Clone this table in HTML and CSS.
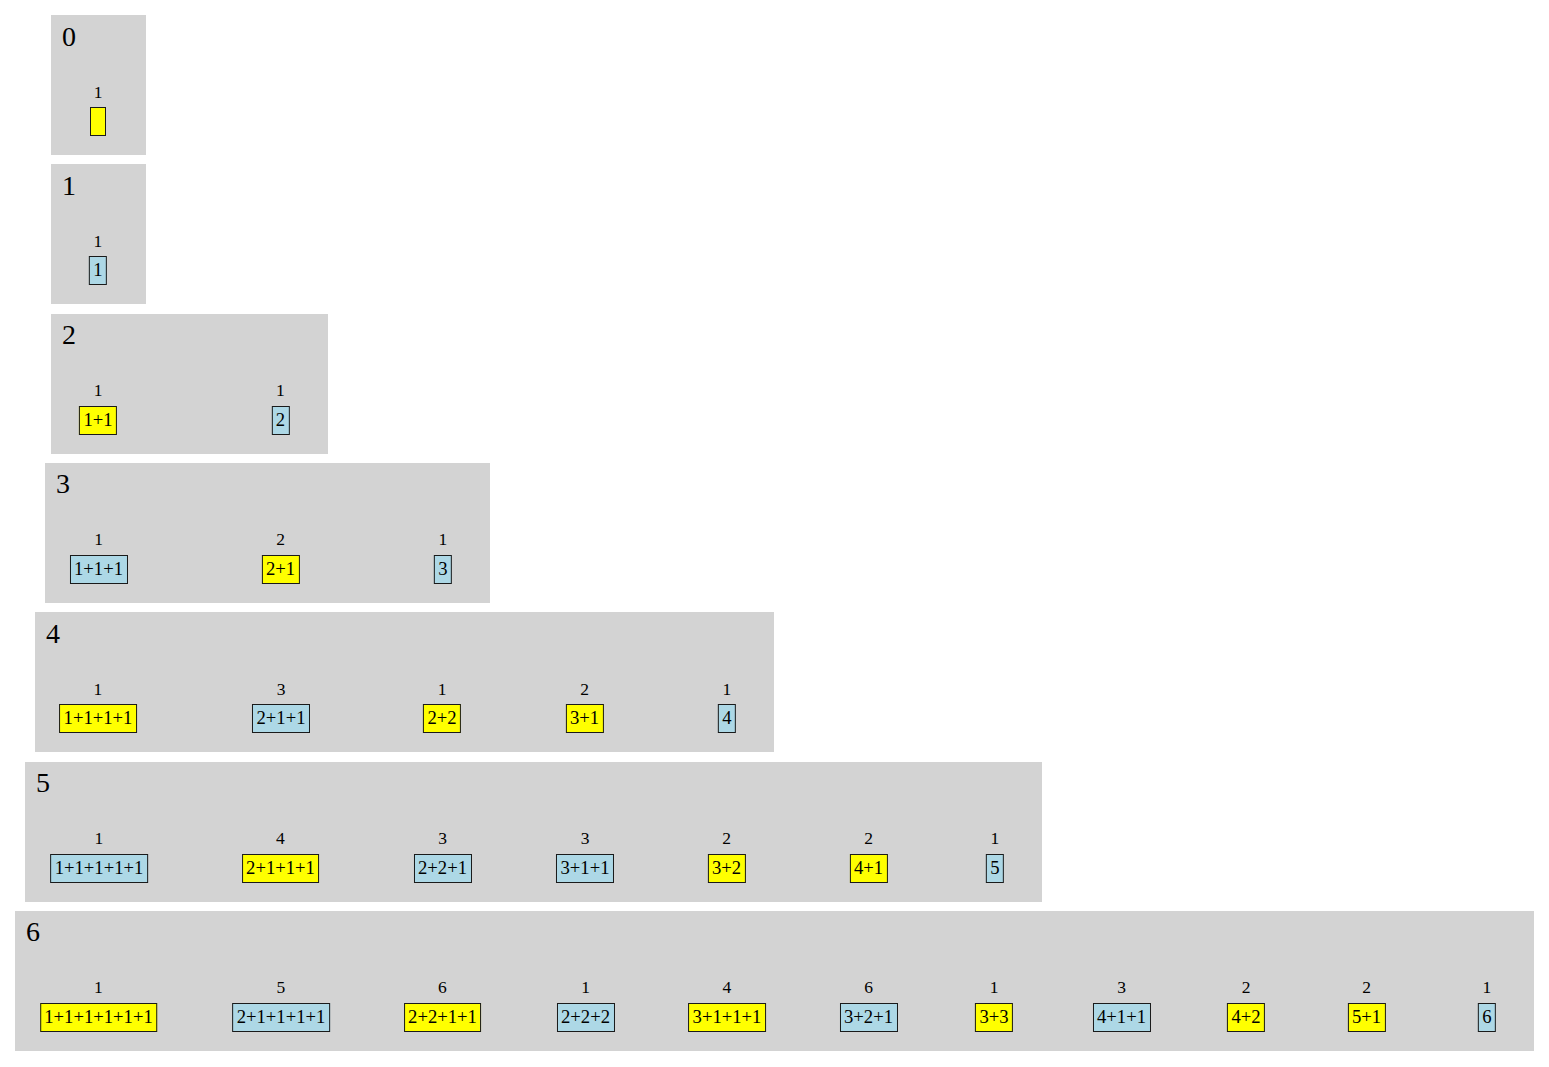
FILE: index.html
```html
<!DOCTYPE html>
<html>
<head>
<meta charset="utf-8">
<title>Partitions</title>
<link rel="stylesheet" href="styles.css">
</head>
<body>
<div class="graph">
  <section class="cluster c0">
    <div class="title">0</div>
    <div class="row">
      <div class="node" style="left:47px"><span class="count">1</span><span class="box yellow"></span></div>
    </div>
  </section>
  <section class="cluster c1">
    <div class="title">1</div>
    <div class="row">
      <div class="node" style="left:47px"><span class="count">1</span><span class="box blue">1</span></div>
    </div>
  </section>
  <section class="cluster c2">
    <div class="title">2</div>
    <div class="row">
      <div class="node" style="left:47px"><span class="count">1</span><span class="box yellow">1+1</span></div>
      <div class="node" style="left:229.5px"><span class="count">1</span><span class="box blue">2</span></div>
    </div>
  </section>
  <section class="cluster c3">
    <div class="title">3</div>
    <div class="row">
      <div class="node" style="left:53.5px"><span class="count">1</span><span class="box blue">1+1+1</span></div>
      <div class="node" style="left:235.5px"><span class="count">2</span><span class="box yellow">2+1</span></div>
      <div class="node" style="left:398px"><span class="count">1</span><span class="box blue">3</span></div>
    </div>
  </section>
  <section class="cluster c4">
    <div class="title">4</div>
    <div class="row">
      <div class="node" style="left:63px"><span class="count">1</span><span class="box yellow">1+1+1+1</span></div>
      <div class="node" style="left:246px"><span class="count">3</span><span class="box blue">2+1+1</span></div>
      <div class="node" style="left:407px"><span class="count">1</span><span class="box yellow">2+2</span></div>
      <div class="node" style="left:549.5px"><span class="count">2</span><span class="box yellow">3+1</span></div>
      <div class="node" style="left:692px"><span class="count">1</span><span class="box blue">4</span></div>
    </div>
  </section>
  <section class="cluster c5">
    <div class="title">5</div>
    <div class="row">
      <div class="node" style="left:74px"><span class="count">1</span><span class="box blue">1+1+1+1+1</span></div>
      <div class="node" style="left:255.5px"><span class="count">4</span><span class="box yellow">2+1+1+1</span></div>
      <div class="node" style="left:417.5px"><span class="count">3</span><span class="box blue">2+2+1</span></div>
      <div class="node" style="left:560px"><span class="count">3</span><span class="box blue">3+1+1</span></div>
      <div class="node" style="left:701.5px"><span class="count">2</span><span class="box yellow">3+2</span></div>
      <div class="node" style="left:843.5px"><span class="count">2</span><span class="box yellow">4+1</span></div>
      <div class="node" style="left:970px"><span class="count">1</span><span class="box blue">5</span></div>
    </div>
  </section>
  <section class="cluster c6">
    <div class="title">6</div>
    <div class="row">
      <div class="node" style="left:83.5px"><span class="count">1</span><span class="box yellow">1+1+1+1+1+1</span></div>
      <div class="node" style="left:266px"><span class="count">5</span><span class="box blue">2+1+1+1+1</span></div>
      <div class="node" style="left:427.5px"><span class="count">6</span><span class="box yellow">2+2+1+1</span></div>
      <div class="node" style="left:570.5px"><span class="count">1</span><span class="box blue">2+2+2</span></div>
      <div class="node" style="left:712px"><span class="count">4</span><span class="box yellow">3+1+1+1</span></div>
      <div class="node" style="left:853.5px"><span class="count">6</span><span class="box blue">3+2+1</span></div>
      <div class="node" style="left:979px"><span class="count">1</span><span class="box yellow">3+3</span></div>
      <div class="node" style="left:1106.5px"><span class="count">3</span><span class="box blue">4+1+1</span></div>
      <div class="node" style="left:1231px"><span class="count">2</span><span class="box yellow">4+2</span></div>
      <div class="node" style="left:1351.5px"><span class="count">2</span><span class="box yellow">5+1</span></div>
      <div class="node" style="left:1472px"><span class="count">1</span><span class="box blue">6</span></div>
    </div>
  </section>
</div>
</body>
</html>
```
FILE: styles.css
```css
html, body {
  margin: 0;
  padding: 0;
  background: #ffffff;
}

body {
  font-family: "Liberation Serif", "Times New Roman", serif;
  color: #000000;
}

.graph {
  display: flex;
  flex-direction: column;
  align-items: flex-start;
  gap: 9.33px;
  padding-top: 15px;
}

.cluster {
  background: #d3d3d3;
  height: 140px;
  box-sizing: border-box;
  display: flex;
  flex-direction: column;
}

.c0, .c1 { margin-left: 51px; width: 95px; }
.c2 { margin-left: 51px; width: 277px; }
.c3 { margin-left: 45px; width: 445px; }
.c4 { margin-left: 35px; width: 739px; }
.c5 { margin-left: 25px; width: 1017px; }
.c6 { margin-left: 15px; width: 1519px; }

.title {
  font-size: 28px;
  line-height: 32px;
  padding: 5.5px 0 0 11px;
  height: 34px;
}

.row {
  position: relative;
  flex: 1;
}

.node {
  position: absolute;
  top: 27px;
  transform: translateX(-50%);
  display: flex;
  flex-direction: column;
  align-items: center;
  gap: 5.4px;
}

.count {
  font-size: 17.5px;
  line-height: 20px;
  white-space: nowrap;
}

.box {
  display: block;
  box-sizing: border-box;
  min-width: 16px;
  height: 29px;
  padding: 0 3.5px;
  border: 1px solid #1a1a1a;
  font-size: 18.67px;
  line-height: 26px;
  white-space: nowrap;
  text-align: center;
}

.yellow { background: #ffff00; }
.blue { background: #add8e6; }
```
